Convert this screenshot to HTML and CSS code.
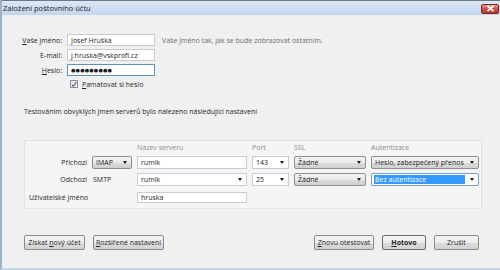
FILE: index.html
```html
<!DOCTYPE html>
<html lang="cs">
<head>
    <meta charset="UTF-8">
    <title>Založení poštovního účtu</title>
    <link rel="stylesheet" href="styles.css">
</head>
<body>
    <div class="window">
        <div class="titlebar">
            <span class="title">Založení poštovního účtu</span>
            <span class="close-btn">
                <svg width="9" height="7" viewBox="0 0 9 7"><path d="M1.5 0.8 L7.5 6.2 M7.5 0.8 L1.5 6.2" stroke="#fff" stroke-width="1.8"/></svg>
            </span>
        </div>
        <div class="content">
            <div class="identity">
                <label class="field-label"><u>V</u>aše jméno:</label>
                <div class="textbox">Josef Hruška</div>
                <span class="hint">Vaše jméno tak, jak se bude zobrazovat ostatním.</span>

                <label class="field-label">E-mail:</label>
                <div class="textbox">j.hruska@vskprofi.cz</div>
                <span></span>

                <label class="field-label"><u>H</u>eslo:</label>
                <div class="textbox focused"><span class="dots">●●●●●●●●●</span></div>
                <span></span>

                <span></span>
                <div class="check-row">
                    <span class="checkbox">
                        <svg width="7" height="7" viewBox="0 0 7 7"><path d="M1 3.6 L2.8 5.6 L6.2 0.8" fill="none" stroke="#4a5f8a" stroke-width="1.3"/></svg>
                    </span>
                    <span><u>P</u>amatovat si heslo</span>
                </div>
                <span></span>
            </div>

            <p class="found">Testováním obvyklých jmen serverů bylo nalezeno následující nastavení</p>

            <div class="panel">
                <span></span>
                <span></span>
                <span class="col-head">Název serveru</span>
                <span class="col-head">Port</span>
                <span class="col-head">SSL</span>
                <span class="col-head">Autentizace</span>

                <span class="row-label">Příchozí</span>
                <div class="select">IMAP<span class="arrow"></span></div>
                <div class="textbox tall">rumik</div>
                <div class="textbox tall combo">143<span class="arrow"></span></div>
                <div class="select">Žádné<span class="arrow"></span></div>
                <div class="select">Heslo, zabezpečený přenos<span class="arrow"></span></div>

                <span class="row-label">Odchozí</span>
                <span class="proto">SMTP</span>
                <div class="textbox tall combo">rumik<span class="arrow"></span></div>
                <div class="textbox tall combo">25<span class="arrow"></span></div>
                <div class="select">Žádné<span class="arrow"></span></div>
                <div class="select active"><span class="selected">Bez autentizace</span><span class="arrow"></span></div>

                <span class="user-label">Uživatelské jméno</span>
                <div class="textbox user-box">hruska</div>
            </div>

            <div class="buttons">
                <div class="btn w-new"><span>Získat <u>n</u>ový účet</span></div>
                <div class="btn w-adv"><span><u>R</u>ozšířené nastavení</span></div>
                <div class="spacer"></div>
                <div class="btn w-retest"><span><u>Z</u>novu otestovat</span></div>
                <div class="btn w-done default"><span><u>H</u>otovo</span></div>
                <div class="btn w-cancel"><span>Zrušit</span></div>
            </div>
        </div>
    </div>
</body>
</html>
```

FILE: styles.css
```css
body {
    margin: 0;
    padding: 0;
    font-family: "Open Sans", "Noto Sans", sans-serif;
    font-size: 7px;
    color: #1e1e1e;
}

.window {
    width: 500px;
    height: 270px;
    background: #f0f0f0;
    box-sizing: border-box;
    border-left: 2px solid #9db3cc;
    border-bottom: 2px solid #c3d6ee;
    overflow: hidden;
}

.titlebar {
    height: 15px;
    box-sizing: border-box;
    border-top: 1px solid #6e7680;
    background: linear-gradient(#dbe7f5, #c2d5ed);
    display: flex;
    align-items: center;
    padding-left: 1px;
}

.title {
    font-size: 7.5px;
    color: #1a1a1a;
}

.close-btn {
    margin-left: auto;
    margin-right: 1px;
    margin-top: 1px;
    width: 18px;
    height: 10px;
    box-sizing: border-box;
    border: 1px solid #7a2a1e;
    border-radius: 2px;
    background: linear-gradient(#e8a08e, #c8503c 50%, #b83a26);
    display: flex;
    align-items: center;
    justify-content: center;
}

.close-btn svg {
    display: block;
}

.content {
    padding: 19px 0 0 20px;
}

.identity {
    display: grid;
    grid-template-columns: 40px 88px auto;
    column-gap: 5px;
    row-gap: 3px;
    align-items: center;
}

.field-label {
    text-align: right;
}

.hint {
    color: #6d6d6d;
    margin-left: 2px;
}

.textbox {
    height: 12px;
    box-sizing: border-box;
    background: #fff;
    border: 1px solid #c8ccd4;
    padding-left: 3px;
    display: flex;
    align-items: center;
    white-space: nowrap;
    overflow: hidden;
}

.textbox.focused {
    border-color: #5c93bc;
}

.dots {
    font-size: 5px;
    letter-spacing: 0.2px;
    font-family: "DejaVu Sans", sans-serif;
}

.check-row {
    display: flex;
    align-items: center;
    gap: 4px;
    padding-left: 3px;
    height: 10px;
}

.checkbox {
    width: 8px;
    height: 8px;
    box-sizing: border-box;
    border: 1px solid #8f8f8f;
    background: linear-gradient(#e6e6e6, #fafafa);
    display: flex;
    align-items: center;
    justify-content: center;
}

.found {
    margin: 18px 0 0 2px;
    line-height: 9px;
}

.panel {
    margin: 24px 0 0 2px;
    width: 458px;
    box-sizing: border-box;
    background: #f5f5f5;
    border: 1px solid #e2e2e2;
    padding: 3px 3px 5px 4px;
    display: grid;
    grid-template-columns: 58px 40px 110px 37px 72px 108px;
    column-gap: 5px;
    row-gap: 4px;
    align-items: center;
}

.col-head {
    color: #8a8a8a;
    line-height: 8px;
}

.row-label {
    text-align: right;
}

.proto {
    padding-left: 1px;
}

.user-label {
    grid-column: 1 / 3;
    margin-top: 2px;
}

.user-box {
    grid-column: 3;
    margin-top: 2px;
    height: 11px;
}

.textbox.tall {
    height: 13px;
}

.select {
    height: 13px;
    box-sizing: border-box;
    border: 1px solid #8e8f8f;
    border-radius: 2px;
    background: linear-gradient(#f2f2f2, #ebebeb 50%, #dddddd 51%, #cfcfcf);
    padding-left: 3px;
    display: flex;
    align-items: center;
    white-space: nowrap;
    overflow: hidden;
}

.select.active {
    border-color: #7a9cc4;
    background: #fff;
    padding-left: 2px;
}

.selected {
    background: #3399ff;
    color: #fff;
    flex: 1;
    height: 9px;
    line-height: 9px;
    padding-left: 1px;
}

.arrow {
    margin-left: auto;
    margin-right: 4px;
    flex: none;
    width: 0;
    height: 0;
    border-left: 2.5px solid transparent;
    border-right: 2.5px solid transparent;
    border-top: 3px solid #1a1a1a;
}

.select.active .arrow {
    margin-left: 5px;
}

.buttons {
    display: flex;
    gap: 8px;
    margin-top: 26px;
    padding-left: 2px;
    padding-right: 21px;
}

.spacer {
    flex: 1;
}

.btn {
    height: 15px;
    box-sizing: border-box;
    border: 1px solid #8a8a8a;
    border-radius: 2px;
    background: linear-gradient(#f4f4f4, #ececec 50%, #dcdcdc 51%, #d2d2d2);
    display: flex;
    align-items: center;
    justify-content: center;
    white-space: nowrap;
}

.btn.default {
    font-weight: bold;
    border-color: #6a6a6a;
}

.w-new { width: 61px; }
.w-adv { width: 71px; }
.w-retest { width: 60px; }
.w-done { width: 44px; }
.w-cancel { width: 45px; }
```
